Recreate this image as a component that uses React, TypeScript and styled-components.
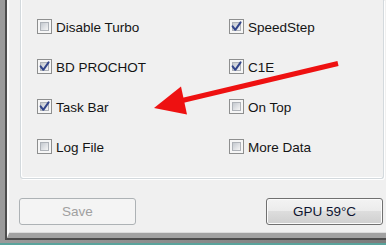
import { createGlobalStyle } from "styled-components";
import styled from "styled-components";

const GlobalStyle = createGlobalStyle`
  html, body {
    margin: 0;
    padding: 0;
    background: #5aa39c;
  }
  body {
    font-family: "Liberation Sans", Arial, sans-serif;
  }
`;

interface Option {
  label: string;
  checked: boolean;
}

const options: Option[] = [
  { label: "Disable Turbo", checked: false },
  { label: "SpeedStep", checked: true },
  { label: "BD PROCHOT", checked: true },
  { label: "C1E", checked: true },
  { label: "Task Bar", checked: true },
  { label: "On Top", checked: false },
  { label: "Log File", checked: false },
  { label: "More Data", checked: false },
];

export default function App(): JSX.Element {
  return (
    <>
      <GlobalStyle />
      <Screen>
        <OuterFrame>
          <DarkFrame>
            <Window>
              <TopRow>
                <GroupBox>
                  <OptionGrid>
                    {options.map((o) => (
                      <OptionRow key={o.label}>
                        <CheckBox $checked={o.checked}>
                          {o.checked && (
                            <svg width="15" height="15" viewBox="0 0 15 15">
                              <path
                                d="M3.6 7.4 L6.3 10.8 L11.6 3.4"
                                fill="none"
                                stroke="#33468a"
                                strokeWidth="2"
                                strokeLinecap="round"
                                strokeLinejoin="round"
                              />
                            </svg>
                          )}
                        </CheckBox>
                        <Label>{o.label}</Label>
                      </OptionRow>
                    ))}
                  </OptionGrid>
                </GroupBox>
                <SideControl />
              </TopRow>
              <ButtonRow>
                <Button disabled>Save</Button>
                <Button>GPU 59°C</Button>
              </ButtonRow>
            </Window>
          </DarkFrame>
        </OuterFrame>
        <Arrow width="386" height="245" viewBox="0 0 386 245">
          <line
            x1="338"
            y1="63.5"
            x2="178"
            y2="101.5"
            stroke="#ee1111"
            strokeWidth="5"
          />
          <polygon points="154,108 181,86.5 187,114.5" fill="#ee1111" />
        </Arrow>
      </Screen>
    </>
  );
}

const Screen = styled.div`
  position: relative;
  width: 386px;
  height: 245px;
  overflow: hidden;
  background: #5aa39c;
`;

const OuterFrame = styled.div`
  height: 243px;
  box-sizing: border-box;
  padding: 0 0 3px 5px;
  background: linear-gradient(to right, #9a9a9a, #7c7c7c);
  display: flex;
`;

const DarkFrame = styled.div`
  flex: 1;
  display: flex;
  border-left: 2px solid #4c4c4c;
  border-bottom: 2px solid #4c4c4c;
`;

const Window = styled.div`
  flex: 1;
  display: flex;
  flex-direction: column;
  background: #f0f0f0;
  border-left: 2px solid #fafafa;
  border-bottom: 5px solid #a2a2a2;
  box-shadow: inset 0 -1px 0 #dcdcdc;
`;

const TopRow = styled.div`
  display: flex;
  align-items: flex-start;
  padding-left: 11px;
`;

const GroupBox = styled.div`
  width: 346px;
  border: 1px solid #d3d9dd;
  border-top: none;
  border-radius: 0 0 3px 3px;
  box-shadow: 1px 1px 0 #ffffff, inset 1px -1px 0 #ffffff;
  padding: 19px 0 23px 16px;
  height: 136px;
`;

const OptionGrid = styled.div`
  display: grid;
  grid-template-columns: 192px 1fr;
  grid-auto-rows: 40px;
`;

const OptionRow = styled.div`
  display: flex;
  align-items: flex-start;
  gap: 4px;
`;

const CheckBox = styled.div<{ $checked: boolean }>`
  position: relative;
  width: 15px;
  height: 15px;
  box-sizing: border-box;
  border: 1px solid #8e8f8f;
  background: #f6f6f6;
  flex-shrink: 0;

  &::before {
    content: "";
    position: absolute;
    inset: 2px;
    border: 1px solid #aeb2b8;
    background: linear-gradient(135deg, #c4c8ce 0%, #e2e4e7 60%, #f5f5f5 100%);
  }

  svg {
    position: absolute;
    left: -1px;
    top: -1px;
  }
`;

const Label = styled.span`
  font-size: 13.5px;
  line-height: 15px;
  color: #141414;
  margin-top: 1px;
`;

const SideControl = styled.div`
  margin-left: 14px;
  margin-top: -10px;
  width: 20px;
  height: 26px;
  flex-shrink: 0;
  border: 1px solid #7a7a7a;
  border-radius: 3px;
  background: linear-gradient(#f2f2f2, #dcdcdc);
`;

const ButtonRow = styled.div`
  display: flex;
  gap: 130px;
  margin-top: 19px;
  padding-left: 10px;
`;

const Button = styled.button`
  width: 117px;
  height: 27px;
  box-sizing: border-box;
  border-radius: 3px;
  font-family: "Liberation Sans", Arial, sans-serif;
  font-size: 13.5px;
  padding: 0;
  border: 1px solid #707070;
  color: #0e1430;
  background: linear-gradient(
    #f3f3f3 0%,
    #ebebeb 49%,
    #dddddd 50%,
    #cfcfcf 100%
  );
  box-shadow: inset 0 0 0 1px #fbfbfb;

  &:disabled {
    border-color: #adb2b5;
    color: #a0a0a0;
    background: #f4f4f4;
    box-shadow: none;
  }
`;

const Arrow = styled.svg`
  position: absolute;
  left: 0;
  top: 0;
  pointer-events: none;
`;
